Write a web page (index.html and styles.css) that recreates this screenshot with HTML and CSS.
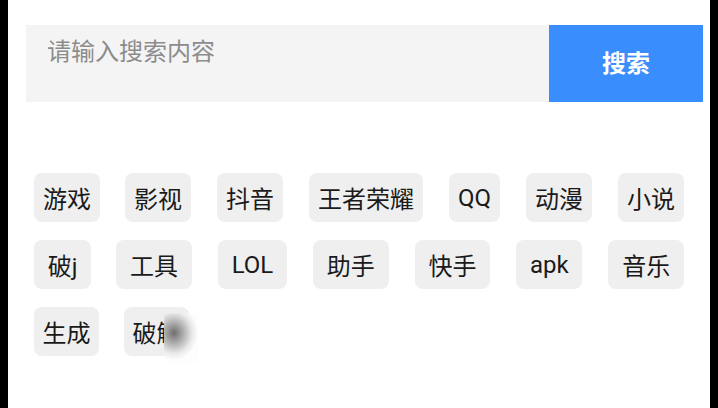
FILE: index.html
```html
<!DOCTYPE html>
<html lang="zh">
<head>
<meta charset="utf-8">
<link rel="stylesheet" href="styles.css">
</head>
<body>
<div class="screen">
  <div class="search">
    <div class="search-input"><span class="placeholder">请输入搜索内容</span></div>
    <div class="search-btn">搜索</div>
  </div>
  <div class="tags">
    <div class="row fill">
      <span class="tag">游戏</span>
      <span class="tag">影视</span>
      <span class="tag">抖音</span>
      <span class="tag">王者荣耀</span>
      <span class="tag">QQ</span>
      <span class="tag">动漫</span>
      <span class="tag">小说</span>
    </div>
    <div class="row fill">
      <span class="tag">破j</span>
      <span class="tag">工具</span>
      <span class="tag">LOL</span>
      <span class="tag">助手</span>
      <span class="tag">快手</span>
      <span class="tag">apk</span>
      <span class="tag">音乐</span>
    </div>
    <div class="row">
      <span class="tag">生成</span>
      <span class="tag smudged">破解<span class="blur"></span></span>
    </div>
  </div>
</div>
</body>
</html>
```

FILE: styles.css
```css
html, body {
  margin: 0;
  padding: 0;
  background: #000;
}
body {
  font-family: Roboto, "Noto Sans CJK SC", sans-serif;
}
.screen {
  margin: 0 8px;
  height: 408px;
  background: #fff;
  overflow: hidden;
  box-sizing: border-box;
  padding-top: 25px;
}
.search {
  display: flex;
  height: 77px;
  margin: 0 7px 0 18px;
}
.search-input {
  flex: 1;
  background: #f4f4f4;
  padding: 12px 21px 0;
  box-sizing: border-box;
}
.placeholder {
  font-size: 24px;
  line-height: 30px;
  color: #8c8c8c;
}
.search-btn {
  width: 154px;
  background: #3a8dfd;
  color: #fff;
  font-size: 24px;
  font-weight: bold;
  display: flex;
  align-items: center;
  justify-content: center;
  padding-bottom: 5px;
  box-sizing: border-box;
}
.tags {
  margin: 71px 26px 0;
  display: flex;
  flex-direction: column;
  gap: 18px;
}
.row {
  display: flex;
  gap: 26px;
}
.tag {
  flex: 0 0 auto;
  height: 49px;
  padding: 0 8.5px;
  background: #efefef;
  border-radius: 8px;
  font-size: 24px;
  color: #1a1a1a;
  display: flex;
  align-items: center;
  justify-content: center;
  box-sizing: border-box;
}
.row.fill .tag {
  flex: 1 1 auto;
}
.row .tag:nth-child(2) {
  margin-left: -1px;
}
.smudged {
  position: relative;
}
.blur {
  position: absolute;
  left: 40px;
  top: 6px;
  width: 34px;
  height: 49px;
  background: radial-gradient(ellipse 24px 27px at 10px 20px, #6e6e6e 0%, #a8a8a8 35%, #e8e8e8 75%, #fdfdfd 100%);
}
```
